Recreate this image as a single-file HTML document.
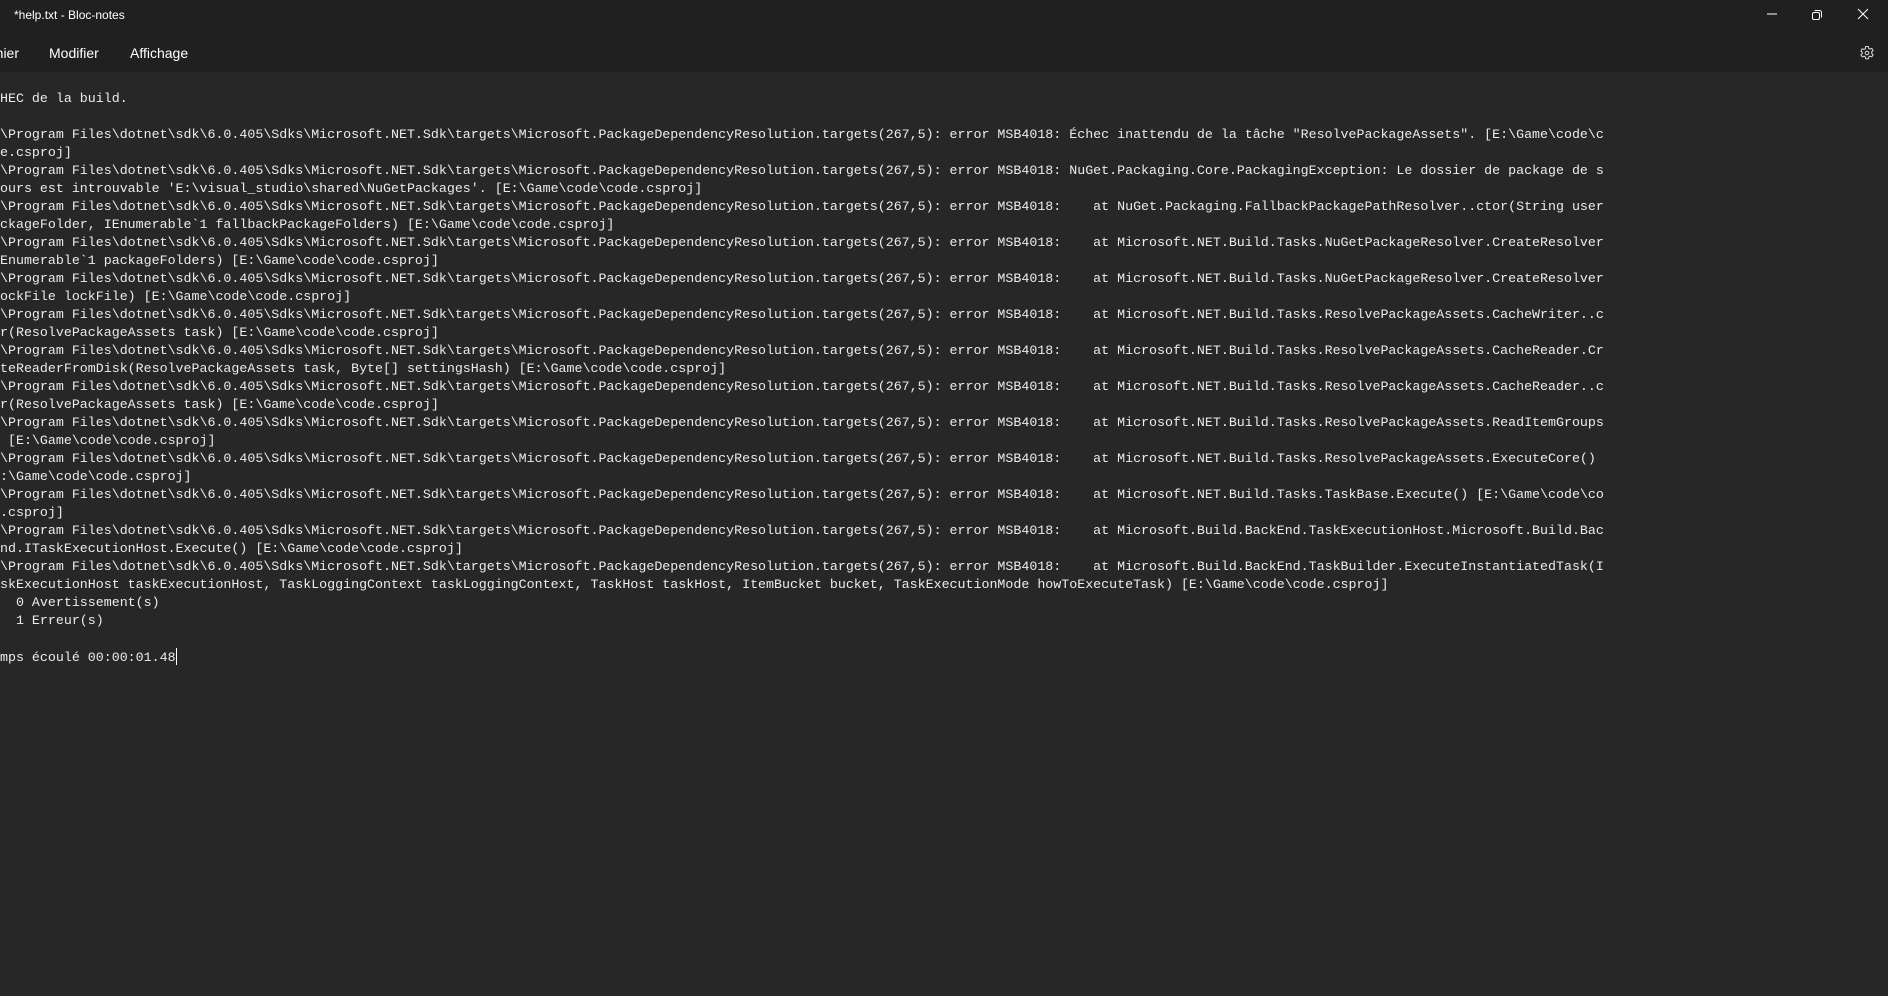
<!DOCTYPE html>
<html><head><meta charset="utf-8">
<style>
html,body{margin:0;padding:0;width:1888px;height:996px;overflow:hidden;background:#272727;}
#top{position:absolute;left:0;top:0;width:1888px;height:72px;background:#202020;}
.t{position:absolute;font-family:"Liberation Sans",sans-serif;color:#fff;white-space:nowrap;}
#txt{position:absolute;left:0px;top:90px;margin:0;font-family:"Liberation Mono",monospace;font-size:13.3px;line-height:18px;color:#ececec;white-space:pre;}
.cur{display:inline-block;width:1px;height:17px;background:#fff;vertical-align:-4px;}
</style></head><body>
<div id="top">
<div class="t" style="left:14px;top:8px;font-size:12px;">*help.txt - Bloc-notes</div>
<div class="t" style="left:-23px;top:45px;font-size:14px;">Fichier</div>
<div class="t" style="left:49px;top:45px;font-size:14px;">Modifier</div>
<div class="t" style="left:130px;top:45px;font-size:14px;">Affichage</div>
<svg style="position:absolute;left:1760px;top:6px" width="120" height="20" viewBox="0 0 120 20">
<line x1="7" y1="8" x2="17" y2="8" stroke="#fff" stroke-width="1"/>
<rect x="52.5" y="6.5" width="7" height="7" rx="1.5" fill="none" stroke="#fff"/>
<path d="M54.5 4.5h5a2 2 0 0 1 2 2v5" fill="none" stroke="#fff"/>
<path d="M98 3l10 10M108 3l-10 10" stroke="#fff" stroke-width="1"/>
</svg>
<svg style="position:absolute;left:1859px;top:45px" width="16" height="16" viewBox="0 0 16 16">
<path d="M6.7 1.5h2.6l.4 1.9 1.3.7 1.8-.7 1.3 2.2-1.4 1.3v1.5l1.4 1.3-1.3 2.2-1.8-.7-1.3.7-.4 1.9H6.7l-.4-1.9-1.3-.7-1.8.7-1.3-2.2 1.4-1.3V7.3L1.9 6l1.3-2.2 1.8.7 1.3-.7z" fill="none" stroke="#ddd" stroke-width="1"/>
<circle cx="8" cy="8" r="1.8" fill="none" stroke="#ddd"/>
</svg>
</div>
<pre id="txt">HEC de la build.

\Program Files\dotnet\sdk\6.0.405\Sdks\Microsoft.NET.Sdk\targets\Microsoft.PackageDependencyResolution.targets(267,5): error MSB4018: Échec inattendu de la tâche "ResolvePackageAssets". [E:\Game\code\c
e.csproj]
\Program Files\dotnet\sdk\6.0.405\Sdks\Microsoft.NET.Sdk\targets\Microsoft.PackageDependencyResolution.targets(267,5): error MSB4018: NuGet.Packaging.Core.PackagingException: Le dossier de package de s
ours est introuvable 'E:\visual_studio\shared\NuGetPackages'. [E:\Game\code\code.csproj]
\Program Files\dotnet\sdk\6.0.405\Sdks\Microsoft.NET.Sdk\targets\Microsoft.PackageDependencyResolution.targets(267,5): error MSB4018:    at NuGet.Packaging.FallbackPackagePathResolver..ctor(String user
ckageFolder, IEnumerable`1 fallbackPackageFolders) [E:\Game\code\code.csproj]
\Program Files\dotnet\sdk\6.0.405\Sdks\Microsoft.NET.Sdk\targets\Microsoft.PackageDependencyResolution.targets(267,5): error MSB4018:    at Microsoft.NET.Build.Tasks.NuGetPackageResolver.CreateResolver
Enumerable`1 packageFolders) [E:\Game\code\code.csproj]
\Program Files\dotnet\sdk\6.0.405\Sdks\Microsoft.NET.Sdk\targets\Microsoft.PackageDependencyResolution.targets(267,5): error MSB4018:    at Microsoft.NET.Build.Tasks.NuGetPackageResolver.CreateResolver
ockFile lockFile) [E:\Game\code\code.csproj]
\Program Files\dotnet\sdk\6.0.405\Sdks\Microsoft.NET.Sdk\targets\Microsoft.PackageDependencyResolution.targets(267,5): error MSB4018:    at Microsoft.NET.Build.Tasks.ResolvePackageAssets.CacheWriter..c
r(ResolvePackageAssets task) [E:\Game\code\code.csproj]
\Program Files\dotnet\sdk\6.0.405\Sdks\Microsoft.NET.Sdk\targets\Microsoft.PackageDependencyResolution.targets(267,5): error MSB4018:    at Microsoft.NET.Build.Tasks.ResolvePackageAssets.CacheReader.Cr
teReaderFromDisk(ResolvePackageAssets task, Byte[] settingsHash) [E:\Game\code\code.csproj]
\Program Files\dotnet\sdk\6.0.405\Sdks\Microsoft.NET.Sdk\targets\Microsoft.PackageDependencyResolution.targets(267,5): error MSB4018:    at Microsoft.NET.Build.Tasks.ResolvePackageAssets.CacheReader..c
r(ResolvePackageAssets task) [E:\Game\code\code.csproj]
\Program Files\dotnet\sdk\6.0.405\Sdks\Microsoft.NET.Sdk\targets\Microsoft.PackageDependencyResolution.targets(267,5): error MSB4018:    at Microsoft.NET.Build.Tasks.ResolvePackageAssets.ReadItemGroups
 [E:\Game\code\code.csproj]
\Program Files\dotnet\sdk\6.0.405\Sdks\Microsoft.NET.Sdk\targets\Microsoft.PackageDependencyResolution.targets(267,5): error MSB4018:    at Microsoft.NET.Build.Tasks.ResolvePackageAssets.ExecuteCore()
:\Game\code\code.csproj]
\Program Files\dotnet\sdk\6.0.405\Sdks\Microsoft.NET.Sdk\targets\Microsoft.PackageDependencyResolution.targets(267,5): error MSB4018:    at Microsoft.NET.Build.Tasks.TaskBase.Execute() [E:\Game\code\co
.csproj]
\Program Files\dotnet\sdk\6.0.405\Sdks\Microsoft.NET.Sdk\targets\Microsoft.PackageDependencyResolution.targets(267,5): error MSB4018:    at Microsoft.Build.BackEnd.TaskExecutionHost.Microsoft.Build.Bac
nd.ITaskExecutionHost.Execute() [E:\Game\code\code.csproj]
\Program Files\dotnet\sdk\6.0.405\Sdks\Microsoft.NET.Sdk\targets\Microsoft.PackageDependencyResolution.targets(267,5): error MSB4018:    at Microsoft.Build.BackEnd.TaskBuilder.ExecuteInstantiatedTask(I
skExecutionHost taskExecutionHost, TaskLoggingContext taskLoggingContext, TaskHost taskHost, ItemBucket bucket, TaskExecutionMode howToExecuteTask) [E:\Game\code\code.csproj]
  0 Avertissement(s)
  1 Erreur(s)

mps écoulé 00:00:01.48<span class="cur"></span></pre>
</body></html>
